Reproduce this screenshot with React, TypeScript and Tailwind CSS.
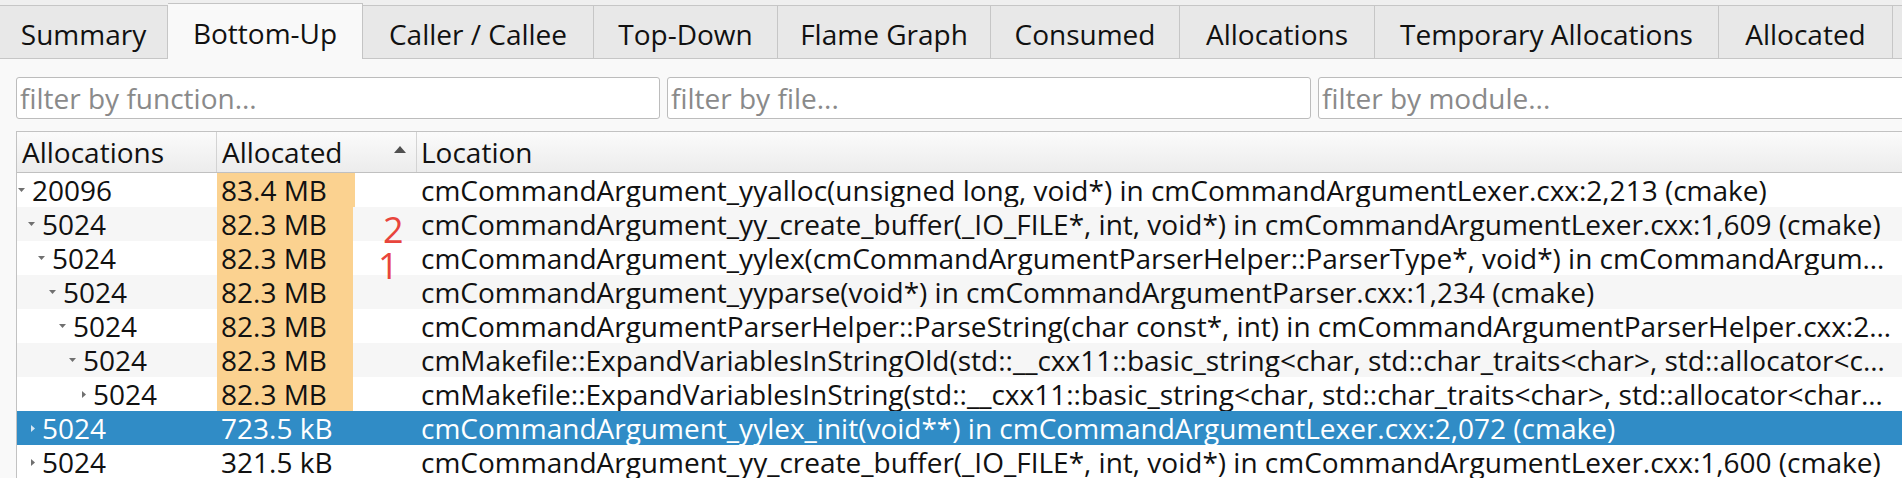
import React from "react";

type Tab = { label: string; w: string; active?: boolean };

const tabs: Tab[] = [
  { label: "Summary", w: "w-[168px]" },
  { label: "Bottom-Up", w: "w-[195px]", active: true },
  { label: "Caller / Callee", w: "w-[231px]" },
  { label: "Top-Down", w: "w-[184px]" },
  { label: "Flame Graph", w: "w-[213px]" },
  { label: "Consumed", w: "w-[189px]" },
  { label: "Allocations", w: "w-[195px]" },
  { label: "Temporary Allocations", w: "w-[344px]" },
  { label: "Allocated", w: "w-[174px]" },
  { label: "Sizes", w: "w-[130px]" },
];

type Row = {
  indent: string;
  open: boolean;
  count: string;
  alloc: string;
  bar: number;
  loc: string;
  selected?: boolean;
};

const rows: Row[] = [
  {
    indent: "w-[1px]",
    open: true,
    count: "20096",
    alloc: "83.4 MB",
    bar: 138,
    loc: "cmCommandArgument_yyalloc(unsigned long, void*) in cmCommandArgumentLexer.cxx:2,213 (cmake)",
  },
  {
    indent: "w-[11px]",
    open: true,
    count: "5024",
    alloc: "82.3 MB",
    bar: 136,
    loc: "cmCommandArgument_yy_create_buffer(_IO_FILE*, int, void*) in cmCommandArgumentLexer.cxx:1,609 (cmake)",
  },
  {
    indent: "w-[21px]",
    open: true,
    count: "5024",
    alloc: "82.3 MB",
    bar: 136,
    loc: "cmCommandArgument_yylex(cmCommandArgumentParserHelper::ParserType*, void*) in cmCommandArgumentLexer.cxx:1,217 (cmake)",
  },
  {
    indent: "w-[32px]",
    open: true,
    count: "5024",
    alloc: "82.3 MB",
    bar: 136,
    loc: "cmCommandArgument_yyparse(void*) in cmCommandArgumentParser.cxx:1,234 (cmake)",
  },
  {
    indent: "w-[42px]",
    open: true,
    count: "5024",
    alloc: "82.3 MB",
    bar: 136,
    loc: "cmCommandArgumentParserHelper::ParseString(char const*, int) in cmCommandArgumentParserHelper.cxx:232 (cmake)",
  },
  {
    indent: "w-[52px]",
    open: true,
    count: "5024",
    alloc: "82.3 MB",
    bar: 136,
    loc: "cmMakefile::ExpandVariablesInStringOld(std::__cxx11::basic_string<char, std::char_traits<char>, std::allocator<char> >&, bool, bool, bool, char const*, long, bool, bool) const in cmMakefile.cxx:2,812 (cmake)",
  },
  {
    indent: "w-[62px]",
    open: false,
    count: "5024",
    alloc: "82.3 MB",
    bar: 136,
    loc: "cmMakefile::ExpandVariablesInString(std::__cxx11::basic_string<char, std::char_traits<char>, std::allocator<char> >&, bool, bool, bool, char const*, long, bool, bool) const in cmMakefile.cxx:2,542 (cmake)",
  },
  {
    indent: "w-[11px]",
    open: false,
    count: "5024",
    alloc: "723.5 kB",
    bar: 0,
    selected: true,
    loc: "cmCommandArgument_yylex_init(void**) in cmCommandArgumentLexer.cxx:2,072 (cmake)",
  },
  {
    indent: "w-[11px]",
    open: false,
    count: "5024",
    alloc: "321.5 kB",
    bar: 0,
    loc: "cmCommandArgument_yy_create_buffer(_IO_FILE*, int, void*) in cmCommandArgumentLexer.cxx:1,600 (cmake)",
  },
];

function Arrow({ open, light }: { open: boolean; light?: boolean }) {
  const fill = light ? "#d6e6f2" : "#707070";
  if (open) {
    return (
      <svg width="7" height="4" viewBox="0 0 7 4" className="block">
        <path d="M0 0H7L3.5 4Z" fill={fill} />
      </svg>
    );
  }
  return (
    <svg width="4" height="7" viewBox="0 0 4 7" className="ml-[3px] block">
      <path d="M0 0V7L4 3.5Z" fill={fill} />
    </svg>
  );
}

export default function App() {
  return (
    <div className="font-['Open_Sans',sans-serif] w-[1980px] h-[478px] overflow-hidden bg-[#efefef] text-[#111111]">
      {/* tab bar */}
      <div className="flex h-[59px] items-end">
        {tabs.map((t) =>
          t.active ? (
            <div
              key={t.label}
              className={`${t.w} h-[56px] shrink-0 border-t border-r border-[#c4c4c4] bg-[#f9f9f9] pt-[12px] text-center text-[28px] leading-[34px] whitespace-nowrap`}
            >
              {t.label}
            </div>
          ) : (
            <div
              key={t.label}
              className={`${t.w} h-[54px] shrink-0 border-t border-r border-b border-[#c6c6c6] bg-[#e8e8e8] pt-[11px] text-center text-[28px] leading-[34px] whitespace-nowrap`}
            >
              {t.label}
            </div>
          )
        )}
      </div>

      {/* content */}
      <div className="bg-[#f9f9f9] px-[16px] pt-[18px] h-[419px]">
        <div className="flex gap-[7px]">
          {["filter by function...", "filter by file...", "filter by module..."].map((p) => (
            <input
              key={p}
              readOnly
              placeholder={p}
              className="h-[42px] w-[644px] shrink-0 rounded-[3px] border border-[#bcbcbc] bg-white px-[3px] text-[28px] font-['Open_Sans',sans-serif] outline-none placeholder:text-[#8a8a8a]"
            />
          ))}
        </div>

        <div className="relative mt-[12px] w-[1946px] border-l border-t border-[#c2c2c2] bg-white">
          {/* header */}
          <div className="flex h-[41px] border-b border-[#c0c0c0] bg-linear-to-b from-[#fbfbfb] to-[#ececec] text-[28px] leading-[40px]">
            <div className="w-[200px] shrink-0 border-r border-[#d3d3d3] pl-[5px]">Allocations</div>
            <div className="flex w-[200px] shrink-0 items-center justify-between border-r border-[#d3d3d3] pl-[5px] pr-[10px]">
              <span>Allocated</span>
              <svg width="12" height="7" viewBox="0 0 12 7" className="mb-[6px] block">
                <path d="M0 7L6 0L12 7Z" fill="#505050" />
              </svg>
            </div>
            <div className="pl-[4px]">Location</div>
          </div>

          {/* rows */}
          {rows.map((r, i) => {
            const stripe = r.selected
              ? "bg-[#308cc6] text-white"
              : i % 2 === 1
              ? "bg-[#f6f6f6]"
              : "bg-white";
            return (
              <div key={i} className={`flex h-[34px] text-[28px] leading-[34px] ${stripe}`}>
                <div className="flex w-[200px] shrink-0 items-center">
                  <div className={`${r.indent} shrink-0`} />
                  <div className="w-[14px] shrink-0">
                    <Arrow open={r.open} light={r.selected} />
                  </div>
                  <span className="whitespace-nowrap">{r.count}</span>
                </div>
                <div
                  className="w-[200px] shrink-0 pl-[4px] whitespace-nowrap"
                  style={
                    r.bar > 0
                      ? {
                          backgroundImage: `linear-gradient(to right, #fbd290 ${r.bar}px, transparent ${r.bar}px)`,
                        }
                      : undefined
                  }
                >
                  {r.alloc}
                </div>
                <div className="w-[1482px] shrink-0 overflow-hidden text-ellipsis whitespace-nowrap pl-[4px] pr-[2px]">
                  {r.loc}
                </div>
              </div>
            );
          })}

          {/* red annotations */}
          <div className="absolute left-[366px] top-[80px] text-[36px] leading-none text-[#e8453c]">2</div>
          <div className="absolute left-[361px] top-[116px] text-[36px] leading-none text-[#e8453c]">1</div>
        </div>
      </div>
    </div>
  );
}
